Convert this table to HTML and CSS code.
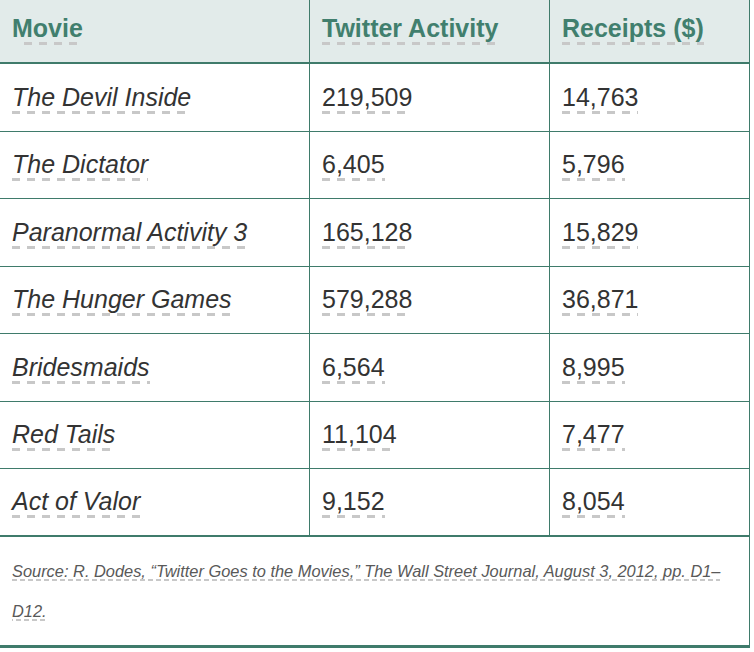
FILE: index.html
```html
<!DOCTYPE html>
<html lang="en">
<head>
<meta charset="utf-8">
<title>Twitter Activity and Box Office Receipts</title>
<link rel="stylesheet" href="styles.css">
</head>
<body>
<table class="data">
  <colgroup>
    <col class="c1">
    <col class="c2">
    <col class="c3">
  </colgroup>
  <thead>
    <tr>
      <th><span class="u u-head">Movie</span></th>
      <th><span class="u">Twitter Activity</span></th>
      <th><span class="u">Receipts ($)</span></th>
    </tr>
  </thead>
  <tbody>
    <tr><td class="title"><span class="u">The Devil Inside</span></td><td><span class="u">219,509</span></td><td><span class="u">14,763</span></td></tr>
    <tr><td class="title"><span class="u">The Dictator</span></td><td><span class="u">6,405</span></td><td><span class="u">5,796</span></td></tr>
    <tr><td class="title"><span class="u">Paranormal Activity 3</span></td><td><span class="u">165,128</span></td><td><span class="u">15,829</span></td></tr>
    <tr><td class="title"><span class="u">The Hunger Games</span></td><td><span class="u">579,288</span></td><td><span class="u">36,871</span></td></tr>
    <tr><td class="title"><span class="u">Bridesmaids</span></td><td><span class="u">6,564</span></td><td><span class="u">8,995</span></td></tr>
    <tr><td class="title"><span class="u">Red Tails</span></td><td><span class="u">11,104</span></td><td><span class="u">7,477</span></td></tr>
    <tr><td class="title"><span class="u">Act of Valor</span></td><td><span class="u">9,152</span></td><td><span class="u">8,054</span></td></tr>
  </tbody>
  <tfoot>
    <tr>
      <td colspan="3" class="source"><span class="u">Source: R. Dodes, “Twitter Goes to the Movies,” The Wall Street Journal, August 3, 2012, pp. D1–D12.</span></td>
    </tr>
  </tfoot>
</table>
</body>
</html>
```
FILE: styles.css
```css
html, body {
  margin: 0;
  padding: 0;
  background: #ffffff;
}

body {
  font-family: "Liberation Sans", Arial, sans-serif;
  color: #333333;
}

.data {
  width: 750px;
  border-collapse: separate;
  border-spacing: 0;
  table-layout: fixed;
}

.c1 { width: 310px; }
.c2 { width: 240px; }
.c3 { width: 200px; }

.data th,
.data td {
  box-sizing: border-box;
  padding: 0 12px;
  text-align: left;
  font-size: 25px;
  line-height: 29px;
  border-right: 1px solid #3f7b6b;
}

.data th {
  height: 64px;
  padding-top: 14px;
  vertical-align: top;
  background: #e2ebea;
  color: #417f6e;
  font-weight: bold;
  border-bottom: 2px solid #3f7b6b;
}

.data tbody td {
  height: 67.5px;
  vertical-align: middle;
  border-bottom: 1px solid #3f7b6b;
}

.data tbody tr:last-child td {
  border-bottom: 2px solid #3f7b6b;
}

.data td.title {
  font-style: italic;
}

/* dashed "checked word" underline, drawn as a background strip */
.u {
  padding-bottom: 3px;
  background-image: repeating-linear-gradient(to right, #c8c8c8 0 8px, transparent 8px 15px);
  background-size: 100% 3px;
  background-position: left bottom;
  background-repeat: no-repeat;
}

.u-head {
  background-position: 12px bottom;
}

.data td.source {
  height: 111px;
  padding: 14px 12px;
  vertical-align: top;
  font-size: 16.4px;
  line-height: 40px;
  font-style: italic;
  color: #595959;
  border-bottom: 3px solid #3f7b6b;
}

.source .u {
  padding-bottom: 1.5px;
  background-image: repeating-linear-gradient(to right, #c8c8c8 0 5px, transparent 5px 8px);
  background-size: 100% 2px;
}
```
